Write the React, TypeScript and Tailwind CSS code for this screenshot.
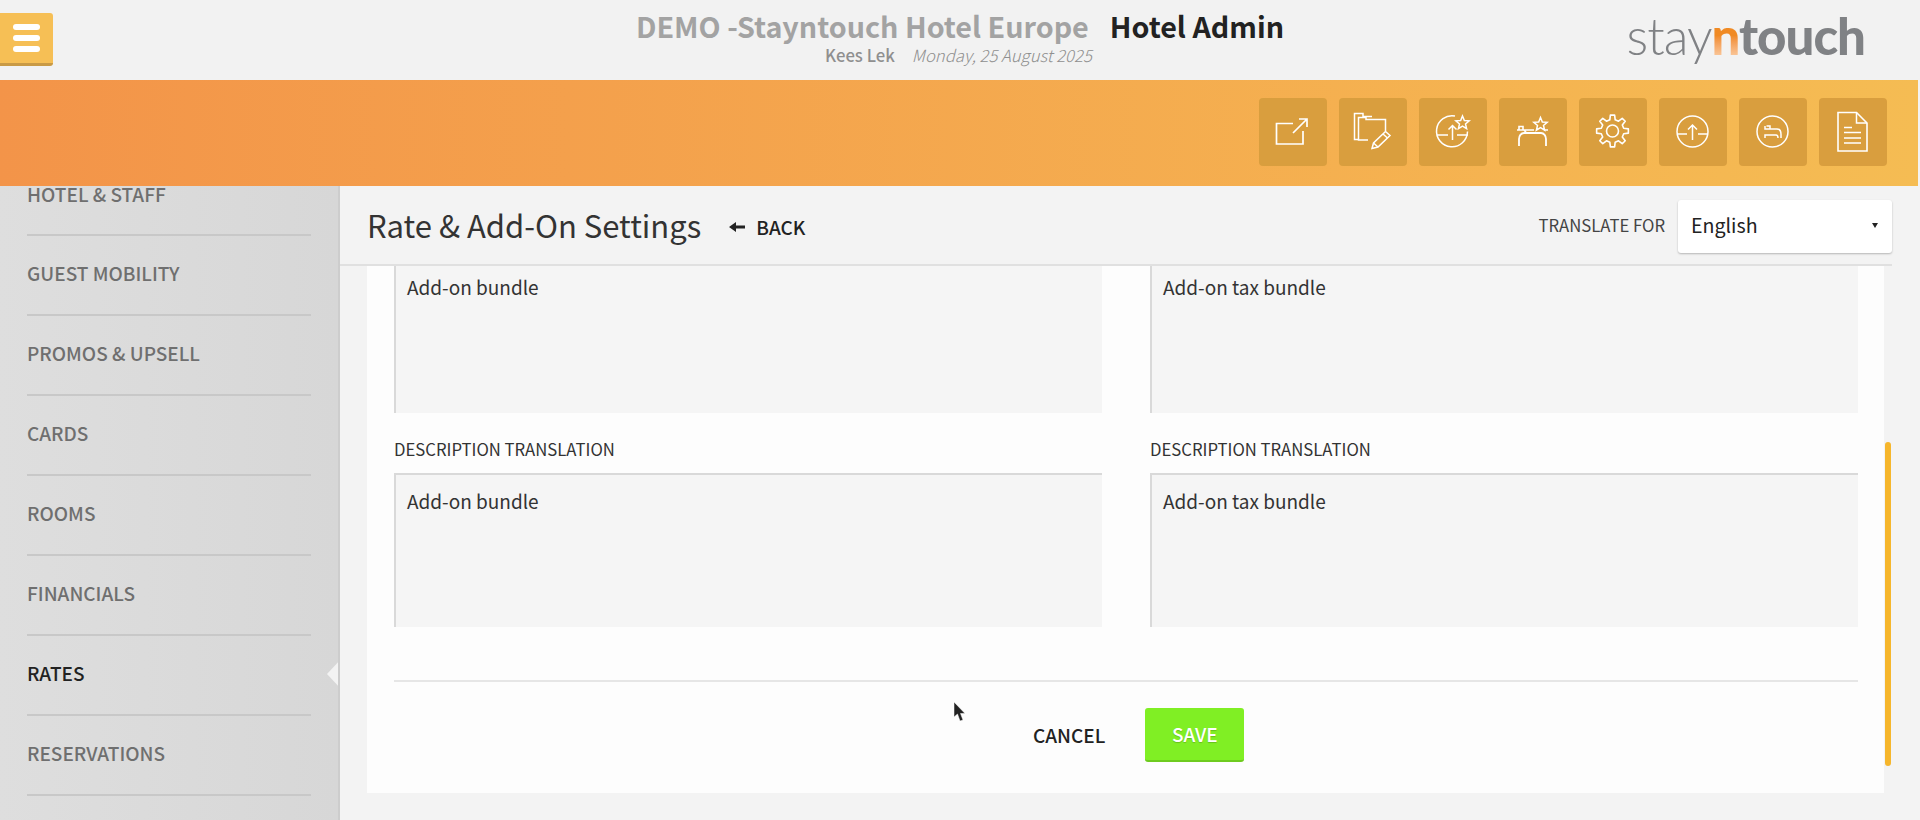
import React from 'react';

const font = { fontFamily: '"Noto Sans CJK JP", "Noto Sans", sans-serif' };

const navItems = ['GUEST MOBILITY', 'PROMOS & UPSELL', 'CARDS', 'ROOMS', 'FINANCIALS', 'RATES', 'RESERVATIONS'];

const Star = ({ cx, cy, r }: { cx: number; cy: number; r: number }) => {
  const pts: string[] = [];
  for (let i = 0; i < 10; i++) {
    const rad = i % 2 === 0 ? r : r * 0.45;
    const a = (Math.PI / 5) * i - Math.PI / 2;
    pts.push(`${(cx + rad * Math.cos(a)).toFixed(2)},${(cy + rad * Math.sin(a)).toFixed(2)}`);
  }
  return <polygon points={pts.join(' ')} />;
};

const gearPath = () => {
  const teeth = 8;
  let d = '';
  for (let i = 0; i < teeth; i++) {
    const step = (Math.PI * 2) / teeth;
    const a = step * i - Math.PI / 2;
    const p = (r: number, o: number) => `${(33.5 + r * Math.cos(a + o)).toFixed(2)} ${(33 + r * Math.sin(a + o)).toFixed(2)}`;
    d += `${i === 0 ? 'M' : 'L'}${p(11.5, -0.3 * step)} L${p(16, -0.17 * step)} L${p(16, 0.17 * step)} L${p(11.5, 0.3 * step)} `;
  }
  return d + 'Z';
};

const icons: React.ReactNode[] = [
  <>
    <path d="M34 25.5H17.5V46H44V33" strokeWidth="1.7" />
    <path d="M34 35L48 21M40 21H48V29" strokeWidth="1.7" />
  </>,
  <>
    <path d="M19 41.5H15.5V15.5H24V18.5H33" />
    <path d="M29 42H19.5V19.5H27V21.5H46.5V33" />
    <path d="M33 50.5L34.5 45L46.5 33.5L51 37.5L39 49Z" />
    <path d="M34.5 45L39 49M44 36L48.5 40" />
  </>,
  <>
    <path d="M48.5 33.5A15.5 15.5 0 1 1 36 18" />
    <path d="M18 37H29M38 37H49M33.5 42V27.5M29.5 31.5L33.5 27.5L37.5 31.5" />
    <Star cx={43.5} cy={25} r={7} />
  </>,
  <>
    <path d="M20 48V41C20 38 22 35 25 35H42C45 35 47 38 47 41V48" strokeWidth="1.8" />
    <path d="M18 32H35M25 32L27.5 35M20 32V28.5H24V32M45 32H49" strokeWidth="1.6" />
    <Star cx={41.5} cy={26.5} r={7} />
  </>,
  <>
    <path d={gearPath()} strokeLinejoin="round" strokeWidth="1.6" />
    <circle cx="33.5" cy="33" r="6" strokeWidth="1.6" />
  </>,
  <>
    <circle cx="33.5" cy="33.5" r="15.5" />
    <path d="M18 36H28M39 36H49M33.5 42V27M29 31.5L33.5 27L38 31.5" />
  </>,
  <>
    <circle cx="33.5" cy="33.5" r="15.5" />
    <path d="M26 28V31H38C40.5 31 42 33.5 42 36.5V40" />
    <path d="M26 40V37H37C38.5 37 39 38 39 40" />
    <path d="M27.5 28H31V31" />
  </>,
  <>
    <path d="M19 14.5H37.5L48 25V53H19Z" strokeWidth="1.6" />
    <path d="M37.5 14.5V25H48" />
    <path d="M25 29.5H33M25 34.5H42M25 40H42M25 45H42" />
  </>,
];

const Box = ({ text, className = '' }: { text: string; className?: string }) => (
  <div className={`h-[154px] bg-[#f5f5f5] border-l-2 border-t-2 border-[#d9d9d9] pl-[11px] pt-[12px] text-[19px] leading-[28px] text-[#333] ${className}`}>
    {text}
  </div>
);

const Column = ({ text }: { text: string }) => (
  <div className="w-[708px]">
    <Box text={text} className="-mt-[7px]" />
    <div className="mt-[24px] mb-[12px] text-[16.7px] leading-[24px] text-[#333]">DESCRIPTION TRANSLATION</div>
    <Box text={text} />
  </div>
);

export default function App() {
  return (
    <div className="relative w-[1920px] h-[820px] overflow-hidden bg-[#f3f3f3] flex flex-col" style={font}>
      {/* Header */}
      <header className="h-[80px] shrink-0 grid grid-cols-[1fr_auto_1fr] bg-[#f2f2f2]">
        <div>
          <button className="mt-[13px] w-[53px] h-[53px] bg-[#f6bf55] border-b-[3px] border-[#c99a45] rounded-r-[3px] flex flex-col justify-center gap-[5px] pl-[13px]">
            <span className="block w-[27px] h-[6px] rounded-full bg-white" />
            <span className="block w-[27px] h-[6px] rounded-full bg-white" />
            <span className="block w-[27px] h-[6px] rounded-full bg-white" />
          </button>
        </div>
        <div className="flex flex-col items-center pt-[10px]">
          <div className="flex gap-[21px] text-[28.7px] leading-[32px] font-bold">
            <span className="text-[#a3a3a3]">DEMO -Stayntouch Hotel Europe</span>
            <span className="text-[#222]">Hotel Admin</span>
          </div>
          <div className="flex gap-[17px] text-[16.7px] leading-[20px] mt-[3px] mr-[3px] text-[#8f8f8f]">
            <span className="font-medium">Kees Lek</span>
            <span className="italic font-light">Monday, 25 August 2025</span>
          </div>
        </div>
        <div className="flex justify-end pr-[55px] pt-[4px]">
          <div className="text-[51px] leading-[64px] tracking-[-1px]" style={{ fontFamily: 'Lato, sans-serif' }}>
            <span className="font-light text-[#808285]">stay</span>
            <span className="font-black bg-gradient-to-b from-[#f08a24] via-[#f08a24] to-[#fbe3c8] bg-clip-text text-transparent">n</span>
            <span className="font-black text-[#808285]">touch</span>
          </div>
        </div>
      </header>

      {/* Orange band */}
      <div className="h-[106px] shrink-0 w-[1918px] bg-gradient-to-r from-[#f39449] to-[#f5bc53] flex justify-end items-start pt-[18px] pr-[31px] gap-[12px]">
        {icons.map((icon, i) => (
          <div key={i} className="w-[68px] h-[68px] rounded-[4px] bg-[#d99e3e]">
            <svg width="68" height="68" viewBox="0 0 68 68" fill="none" stroke="white" strokeWidth="1.5">
              {icon}
            </svg>
          </div>
        ))}
      </div>

      <div className="flex-1 flex min-h-0">
        {/* Sidebar */}
        <aside className="relative w-[340px] shrink-0 bg-gradient-to-r from-[#dedede] to-[#d7d7d7] border-r-2 border-[#cdcdcd] px-[27px] overflow-hidden">
          <div className="h-[50px] border-b-2 border-[#c8c8c8] text-[19px] leading-[15px] font-medium text-[#6f6f6f]">HOTEL &amp; STAFF</div>
          {navItems.map(item => (
            <div
              key={item}
              className={`h-[80px] pb-[3px] border-b-2 border-[#c8c8c8] flex items-center text-[19px] font-medium ${item === 'RATES' ? 'text-[#222]' : 'text-[#6f6f6f]'}`}
            >
              {item}
            </div>
          ))}
          <div className="absolute right-[-2px] top-[474px] w-0 h-0 border-y-[14px] border-y-transparent border-r-[13px] border-r-[#f3f3f3]" />
        </aside>

        {/* Main */}
        <main className="flex-1 min-w-0 flex flex-col">
          <div className="h-[80px] shrink-0 mr-[28px] pl-[27px] border-b-2 border-[#e0e0e0] flex items-center">
            <h1 className="text-[31px] font-normal text-[#333] leading-[44px]">Rate &amp; Add-On Settings</h1>
            <span className="ml-[28px] mt-[4px] flex items-center gap-[11px] text-[#222] font-medium text-[19px]">
              <svg width="16" height="12" viewBox="0 0 16 12" fill="#222">
                <path d="M0 6L7 1V4.5H16V7.5H7V11Z" />
              </svg>
              BACK
            </span>
            <span className="ml-auto mt-[2px] text-[16.7px] text-[#444]">TRANSLATE FOR</span>
            <div className="ml-[13px] mt-[3px] w-[214px] h-[53px] pb-[3px] bg-white rounded-[3px] shadow-[0_1px_2px_rgba(0,0,0,0.25)] flex items-center justify-between pl-[13px] pr-[14px] text-[19.6px] text-[#222]">
              English
              <span className="w-0 h-0 border-x-[3.5px] border-x-transparent border-t-[5px] border-t-[#222]" />
            </div>
          </div>

          <div className="relative ml-[27px] w-[1517px] h-[527px] bg-[#fdfdfd] overflow-hidden px-[27px]">
            <div className="flex justify-between w-[1464px]">
              <Column text="Add-on bundle" />
              <Column text="Add-on tax bundle" />
            </div>
            <div className="mt-[53px] w-[1464px] border-t-2 border-[#e6e6e6]" />
            <div className="mt-[26px] w-[1464px] relative flex items-start">
              <span className="ml-[639px] mt-[13px] text-[19px] leading-[28px] font-medium text-[#222]">CANCEL</span>
              <button className="ml-[40px] w-[99px] h-[54px] rounded-[3px] bg-[#80ef24] border-b-2 border-[#6ecb1f] text-white text-[19px] font-medium [text-shadow:0_1px_1px_rgba(0,0,0,0.2)]">
                SAVE
              </button>
            </div>
          </div>
        </main>
      </div>

      {/* Scrollbar thumb */}
      <div className="absolute left-[1885px] top-[442px] w-[6px] h-[324px] rounded-full bg-[#f6b62c]" />

      {/* Mouse cursor */}
      <svg className="absolute left-[953px] top-[701px]" width="14" height="22" viewBox="0 0 14 22" fill="#222" stroke="#fff" strokeWidth="0.5">
        <path d="M1 1V16L4.5 13L7 20L10 19L7.5 12.5H12Z" />
      </svg>
    </div>
  );
}
